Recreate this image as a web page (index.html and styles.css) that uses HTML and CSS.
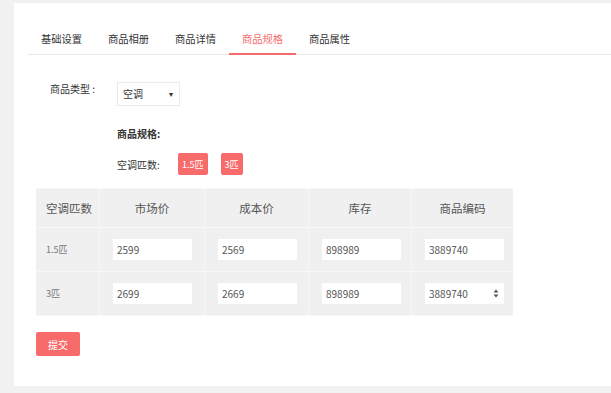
FILE: index.html
```html
<!DOCTYPE html>
<html lang="zh-CN">
<head>
    <meta charset="UTF-8">
    <title>商品规格</title>
    <link rel="stylesheet" href="styles.css">
</head>
<body>
    <div class="panel">
        <ul class="tabs">
            <li>基础设置</li>
            <li>商品相册</li>
            <li>商品详情</li>
            <li class="active">商品规格</li>
            <li>商品属性</li>
        </ul>

        <div class="form-row type-row">
            <label class="form-label">商品类型 :</label>
            <div class="select">
                <span>空调</span>
                <span class="caret">▾</span>
            </div>
        </div>

        <div class="spec">
            <div class="spec-title">商品规格:</div>
            <div class="spec-row">
                <span class="spec-label">空调匹数:</span>
                <button class="tag">1.5匹</button>
                <button class="tag">3匹</button>
            </div>
        </div>

        <table class="spec-table">
            <thead>
                <tr>
                    <th class="col-name">空调匹数</th>
                    <th>市场价</th>
                    <th>成本价</th>
                    <th>库存</th>
                    <th>商品编码</th>
                </tr>
            </thead>
            <tbody>
                <tr>
                    <td class="col-name">1.5匹</td>
                    <td><input type="text" value="2599"></td>
                    <td><input type="text" value="2569"></td>
                    <td><input type="text" value="898989"></td>
                    <td><input type="text" value="3889740"></td>
                </tr>
                <tr>
                    <td class="col-name">3匹</td>
                    <td><input type="text" value="2699"></td>
                    <td><input type="text" value="2669"></td>
                    <td><input type="text" value="898989"></td>
                    <td>
                        <span class="number">
                            <input type="text" value="3889740">
                            <svg class="spin" width="6" height="9" viewBox="0 0 6 9"><path d="M3 0.5L5.5 3.5H0.5Z M3 8.5L5.5 5.5H0.5Z" fill="#555"/></svg>
                        </span>
                    </td>
                </tr>
            </tbody>
        </table>

        <button class="submit">提交</button>
    </div>
</body>
</html>
```

FILE: styles.css
```css
body {
    margin: 0;
    background-color: #f1f1f1;
    font-family: "Noto Sans CJK SC", "Noto Sans", sans-serif;
    font-size: 10px;
    color: #333;
}

.panel {
    margin: 3px 0 7px 14px;
    padding: 22px 0 30px 14px;
    background-color: #fff;
    height: 331px;
}

.tabs {
    display: flex;
    margin: 0;
    padding: 0;
    list-style: none;
    border-bottom: 1px solid #e8e8e8;
}

.tabs li {
    width: 67px;
    text-align: center;
    line-height: 28px;
    font-size: 10.3px;
    color: #333;
    border-bottom: 2px solid transparent;
    margin-bottom: -1px;
}

.tabs li.active {
    color: #f56c6c;
    border-bottom-color: #f56c6c;
}

.form-row {
    display: flex;
    align-items: flex-start;
}

.type-row {
    margin: 27px 0 0 22px;
}

.form-label {
    width: 67px;
    line-height: 14px;
    color: #333;
}

.select {
    width: 63px;
    height: 24px;
    box-sizing: border-box;
    border: 1px solid #ebebeb;
    padding: 0 6px 0 5px;
    display: flex;
    align-items: center;
    justify-content: space-between;
    line-height: 22px;
}

.caret {
    font-size: 8px;
    color: #333;
}

.spec {
    margin: 21px 0 0 89px;
}

.spec-title {
    font-weight: bold;
    line-height: 14px;
}

.spec-row {
    display: flex;
    align-items: center;
    margin-top: 12px;
}

.spec-label {
    width: 61px;
}

.tag {
    height: 22px;
    padding: 0 4px;
    margin-right: 13px;
    border: none;
    border-radius: 2px;
    background-color: #f76b6b;
    color: #fff;
    font-family: inherit;
    font-size: 9px;
}

.spec-table {
    margin: 13px 0 0 8px;
    border-collapse: collapse;
    background-color: #f0f0f0;
    width: 477px;
    table-layout: fixed;
}

.spec-table th,
.spec-table td {
    border: 1px solid #f7f7f7;
    padding: 0;
}

.spec-table tr > :first-child {
    border-left: none;
}

.spec-table tr > :last-child {
    border-right: none;
}

.spec-table th {
    height: 38px;
    font-weight: normal;
    font-size: 11.5px;
    color: #555;
}

.spec-table td {
    height: 43px;
    padding-left: 13px;
}

.spec-table .col-name {
    width: 53px;
    padding-left: 10px;
    text-align: left;
}

.spec-table th:nth-child(2) { width: 104px; }
.spec-table th:nth-child(3) { width: 103px; }
.spec-table th:nth-child(4) { width: 102px; }

.spec-table td.col-name {
    font-size: 9px;
    color: #777;
}

.spec-table input {
    width: 79px;
    height: 21px;
    box-sizing: border-box;
    border: none;
    padding: 0 4px;
    font-family: inherit;
    font-size: 10px;
    color: #555;
    background-color: #fff;
    display: block;
}

.number {
    position: relative;
    display: block;
    width: 79px;
}

.spin {
    position: absolute;
    right: 5px;
    top: 6px;
}

.submit {
    margin: 16px 0 0 8px;
    width: 44px;
    height: 24px;
    border: none;
    border-radius: 2px;
    background-color: #f76b6b;
    color: #fff;
    font-family: inherit;
    font-size: 10px;
}
```
